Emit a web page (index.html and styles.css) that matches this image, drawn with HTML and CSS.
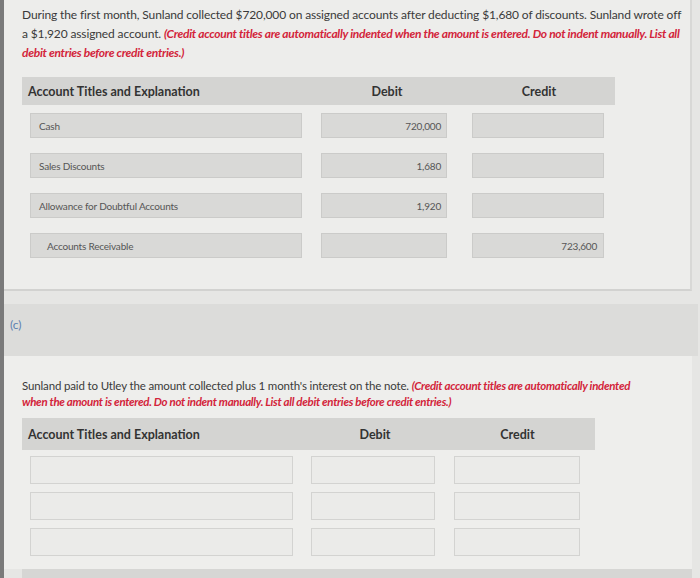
FILE: index.html
```html
<!DOCTYPE html>
<html>
<head>
<meta charset="utf-8">
<link rel="stylesheet" href="styles.css">
</head>
<body>
<div class="page">
  <div class="edge"></div>
  <div class="main">
    <section class="card top">
      <p class="prompt">During the first month, Sunland collected $720,000 on assigned accounts after deducting $1,680 of discounts. Sunland wrote off a $1,920 assigned account. <em class="note">(Credit account titles are automatically indented when the amount is entered. Do not indent manually. List all debit entries before credit entries.)</em></p>
      <div class="table t1">
        <div class="head">
          <div class="h-acc">Account Titles and Explanation</div>
          <div class="h-deb">Debit</div>
          <div class="h-cre">Credit</div>
        </div>
        <div class="row">
          <div class="box acc">Cash</div>
          <div class="box deb">720,000</div>
          <div class="box cre"></div>
        </div>
        <div class="row">
          <div class="box acc">Sales Discounts</div>
          <div class="box deb">1,680</div>
          <div class="box cre"></div>
        </div>
        <div class="row">
          <div class="box acc">Allowance for Doubtful Accounts</div>
          <div class="box deb">1,920</div>
          <div class="box cre"></div>
        </div>
        <div class="row">
          <div class="box acc indent">Accounts Receivable</div>
          <div class="box deb"></div>
          <div class="box cre">723,600</div>
        </div>
      </div>
    </section>
    <div class="band"><span class="label">(c)</span></div>
    <section class="card bottom">
      <p class="prompt small">Sunland paid to Utley the amount collected plus 1 month's interest on the note. <em class="note">(Credit account titles are automatically indented when the amount is entered. Do not indent manually. List all debit entries before credit entries.)</em></p>
      <div class="table t2">
        <div class="head">
          <div class="h-acc">Account Titles and Explanation</div>
          <div class="h-deb">Debit</div>
          <div class="h-cre">Credit</div>
        </div>
        <div class="row">
          <div class="box empty acc"></div>
          <div class="box empty deb"></div>
          <div class="box empty cre"></div>
        </div>
        <div class="row">
          <div class="box empty acc"></div>
          <div class="box empty deb"></div>
          <div class="box empty cre"></div>
        </div>
        <div class="row">
          <div class="box empty acc"></div>
          <div class="box empty deb"></div>
          <div class="box empty cre"></div>
        </div>
      </div>
    </section>
    <div class="next"></div>
  </div>
</div>
</body>
</html>
```

FILE: styles.css
```css
html, body {
  margin: 0;
  padding: 0;
  background: #e6e6e4;
  font-family: Lato, "Open Sans", sans-serif;
  color: #3a3a3a;
}
.page {
  display: flex;
  width: 700px;
  height: 578px;
  overflow: hidden;
}
.edge {
  width: 4px;
  flex: none;
  background: #7a7a7a;
}
.main {
  flex: 1;
  display: flex;
  flex-direction: column;
  margin-right: 8px;
}
.card {
  background: #ededeb;
}
.top {
  padding: 5px 0 0 18px;
  height: 284px;
  border-bottom: 2px solid #d2d2d0;
  border-right: 2px solid #d8d8d6;
}
.prompt {
  margin: 0;
  font-size: 12px;
  line-height: 19px;
  letter-spacing: -0.13px;
  padding-right: 6px;
}
.note {
  color: #d3243a;
  font-weight: 700;
  letter-spacing: -0.3px;
}
.table {
  display: flex;
  flex-direction: column;
}
.t1 {
  margin-top: 15px;
  width: 593px;
  gap: 15px;
}
.head {
  display: flex;
  align-items: center;
  background: #d4d4d2;
  font-weight: 700;
  font-size: 12.5px;
  color: #333;
}
.head > div {
  box-sizing: border-box;
}
.t1 .head {
  height: 28px;
  margin-bottom: -7px;
}
.h-acc {
  width: 295px;
  padding-left: 6px;
}
.h-deb {
  width: 140px;
  text-align: center;
}
.h-cre {
  flex: 1;
  text-align: center;
  padding-left: 6px;
}
.row {
  display: flex;
  padding-left: 8px;
}
.box {
  box-sizing: border-box;
  background: #d9d9d7;
  border: 1px solid #cbcbc9;
  font-size: 10px;
  color: #555;
  display: flex;
  align-items: center;
  letter-spacing: -0.2px;
}
.t1 .box {
  height: 25px;
}
.t1 .acc {
  width: 272px;
  padding-left: 8px;
}
.t1 .acc.indent {
  padding-left: 16px;
}
.t1 .deb {
  width: 126px;
  margin-left: 19px;
  justify-content: flex-end;
  padding-right: 5px;
}
.t1 .cre {
  width: 132px;
  margin-left: 25px;
  justify-content: flex-end;
  padding-right: 6px;
}
.band {
  margin-top: 13px;
  height: 52px;
  background: #dcdcda;
  display: flex;
  align-items: center;
  margin-right: -6px;
}
.label {
  font-size: 12px;
  color: #5d7fb0;
  padding-left: 6px;
  margin-top: -12px;
}
.bottom {
  padding: 22px 0 0 18px;
  height: 191px;
  background: #eeeeec;
}
.prompt.small {
  font-size: 11.5px;
  line-height: 16px;
  letter-spacing: -0.15px;
  padding-right: 40px;
}
.prompt.small .note {
  letter-spacing: -0.3px;
}
.t2 {
  margin-top: 8px;
  width: 573px;
  gap: 8px;
}
.t2 .head {
  height: 32px;
  margin-bottom: -2px;
}
.t2 .h-acc {
  width: 288px;
}
.t2 .h-deb {
  width: 130px;
}
.t2 .h-cre {
  padding-left: 0;
}
.t2 .box {
  height: 28px;
}
.box.empty {
  background: #ebebe9;
  border: 1px solid #d3d3d1;
}
.t2 .acc {
  width: 263px;
}
.t2 .deb {
  width: 124px;
  margin-left: 18px;
}
.t2 .cre {
  width: 126px;
  margin-left: 19px;
}
.next {
  margin-left: 18px;
  flex: 1;
  background: #d6d6d4;
}
```
